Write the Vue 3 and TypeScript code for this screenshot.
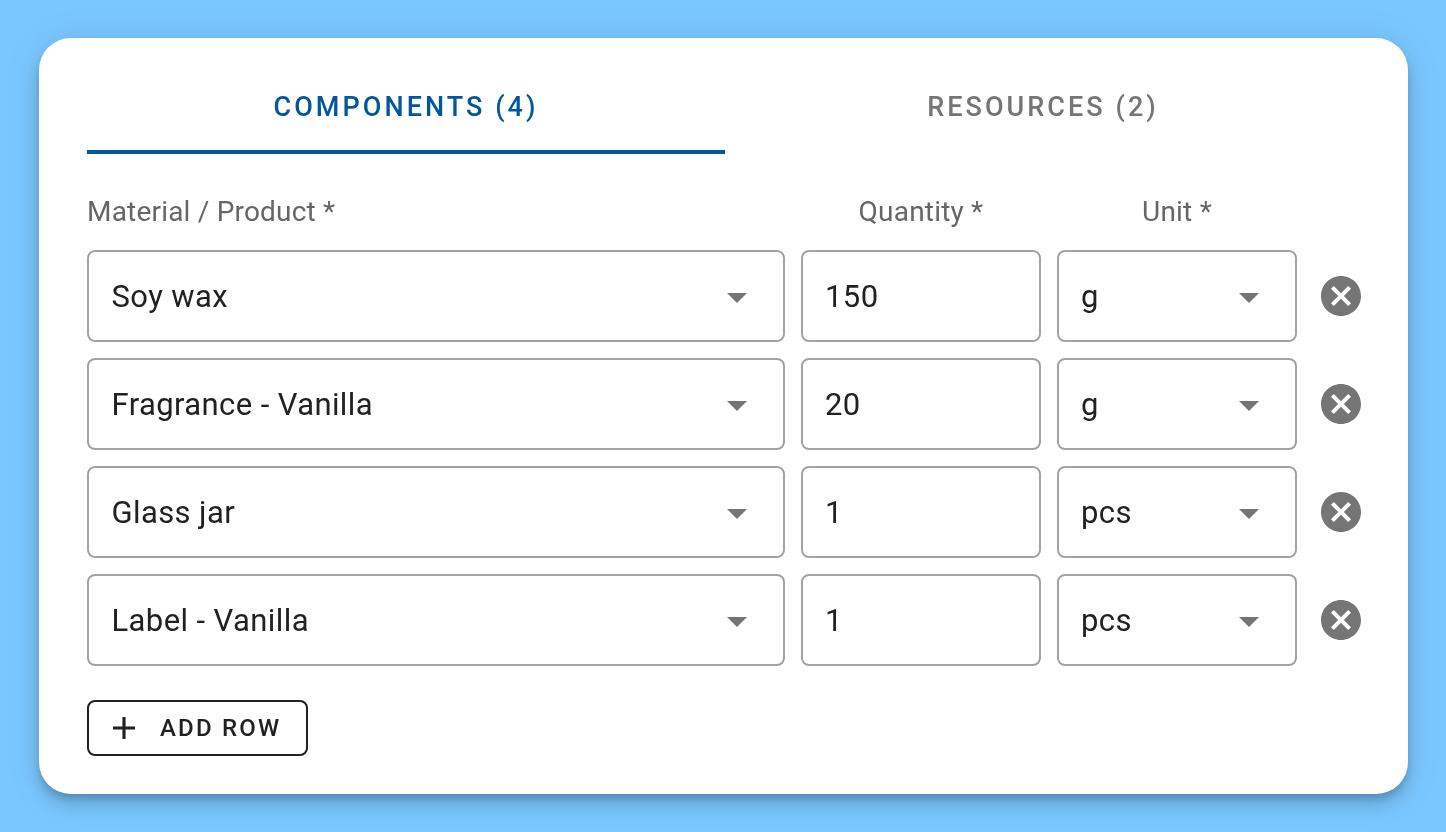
<script setup lang="ts">
interface Row { name: string; qty: string; unit: string }
const rows: Row[] = [
  { name: 'Soy wax', qty: '150', unit: 'g' },
  { name: 'Fragrance - Vanilla', qty: '20', unit: 'g' },
  { name: 'Glass jar', qty: '1', unit: 'pcs' },
  { name: 'Label - Vanilla', qty: '1', unit: 'pcs' },
]
</script>

<template>
  <main class="page">
    <section class="card">
      <div class="tabs">
        <div class="tab active">COMPONENTS (4)</div>
        <div class="tab">RESOURCES (2)</div>
      </div>
      <div class="grid heads">
        <div class="head">Material / Product *</div>
        <div class="head center">Quantity *</div>
        <div class="head center">Unit *</div>
        <div></div>
      </div>
      <div v-for="row in rows" :key="row.name" class="grid row">
        <div class="field wide">
          <span>{{ row.name }}</span>
          <svg class="arrow" viewBox="0 0 24 24"><path d="M7 10l5 5 5-5z" /></svg>
        </div>
        <div class="field"><span>{{ row.qty }}</span></div>
        <div class="field">
          <span>{{ row.unit }}</span>
          <svg class="arrow" viewBox="0 0 24 24"><path d="M7 10l5 5 5-5z" /></svg>
        </div>
        <svg class="remove" viewBox="2 2 20 20"><path d="M12 2C6.47 2 2 6.47 2 12s4.47 10 10 10 10-4.47 10-10S17.53 2 12 2zm5 13.59L15.59 17 12 13.41 8.41 17 7 15.59 10.59 12 7 8.41 8.41 7 12 10.59 15.59 7 17 8.41 13.41 12 17 15.59z" /></svg>
      </div>
      <button class="add" type="button">
        <svg class="plus" viewBox="5 5 14 14"><path d="M19 13h-6v6h-2v-6H5v-2h6V5h2v6h6v2z" /></svg>
        <span>ADD ROW</span>
      </button>
    </section>
  </main>
</template>

<style>
body { margin: 0; }
</style>

<style scoped>
.page {
  width: 1446px;
  height: 832px;
  box-sizing: border-box;
  background: #7ac7ff;
  padding: 38px 38px 38px 39px;
  font-family: Roboto, "Liberation Sans", sans-serif;
  overflow: hidden;
}
.card {
  width: 1369px;
  height: 756px;
  box-sizing: border-box;
  background: #fff;
  border-radius: 32px;
  padding: 32px 47px 0 48px;
  box-shadow: 0 6px 10px -2px rgba(0, 0, 0, 0.2), 0 12px 20px rgba(0, 0, 0, 0.12), 0 2px 36px rgba(0, 0, 0, 0.1);
  will-change: transform;
}
.tabs {
  display: grid;
  grid-template-columns: 638px 636px;
  margin-bottom: 40px;
}
.tab {
  height: 84px;
  box-sizing: border-box;
  padding-bottom: 10px;
  display: flex;
  align-items: center;
  justify-content: center;
  font-size: 27px;
  font-weight: 500;
  letter-spacing: 3.05px;
  color: #757575;
}
.tab.active {
  color: #01579b;
  padding-bottom: 6px;
  border-bottom: 4px solid #01579b;
}
.grid {
  display: grid;
  grid-template-columns: 698px 240px 240px 40px;
  column-gap: 16px;
  align-items: center;
}
.heads {
  height: 36px;
  margin-top: -1px;
  margin-bottom: 21px;
}
.head {
  font-size: 28px;
  letter-spacing: 0.2px;
  color: #666;
}
.center { text-align: center; }
.row {
  height: 92px;
  margin-bottom: 16px;
}
.field {
  height: 92px;
  box-sizing: border-box;
  border: 2px solid #a3a3a3;
  border-radius: 8px;
  padding: 0 22px;
  display: flex;
  align-items: center;
  justify-content: space-between;
  font-size: 31px;
  letter-spacing: 0.4px;
  color: #212121;
}
.field.wide { padding-left: 22.5px; }
.arrow {
  width: 48px;
  height: 48px;
  margin-top: 2px;
  fill: #757575;
}
.remove {
  width: 40px;
  height: 40px;
  margin-left: 8px;
  fill: #757575;
}
.add {
  margin-top: 34px;
  width: 221px;
  height: 56px;
  box-sizing: border-box;
  border: 2px solid #212121;
  border-radius: 8px;
  background: #fff;
  padding: 0 0 0 24px;
  display: flex;
  align-items: center;
  gap: 25px;
  font-family: inherit;
  font-size: 24px;
  font-weight: 500;
  letter-spacing: 2.2px;
  color: #212121;
}
.plus {
  width: 22px;
  height: 22px;
  fill: #212121;
}
</style>
